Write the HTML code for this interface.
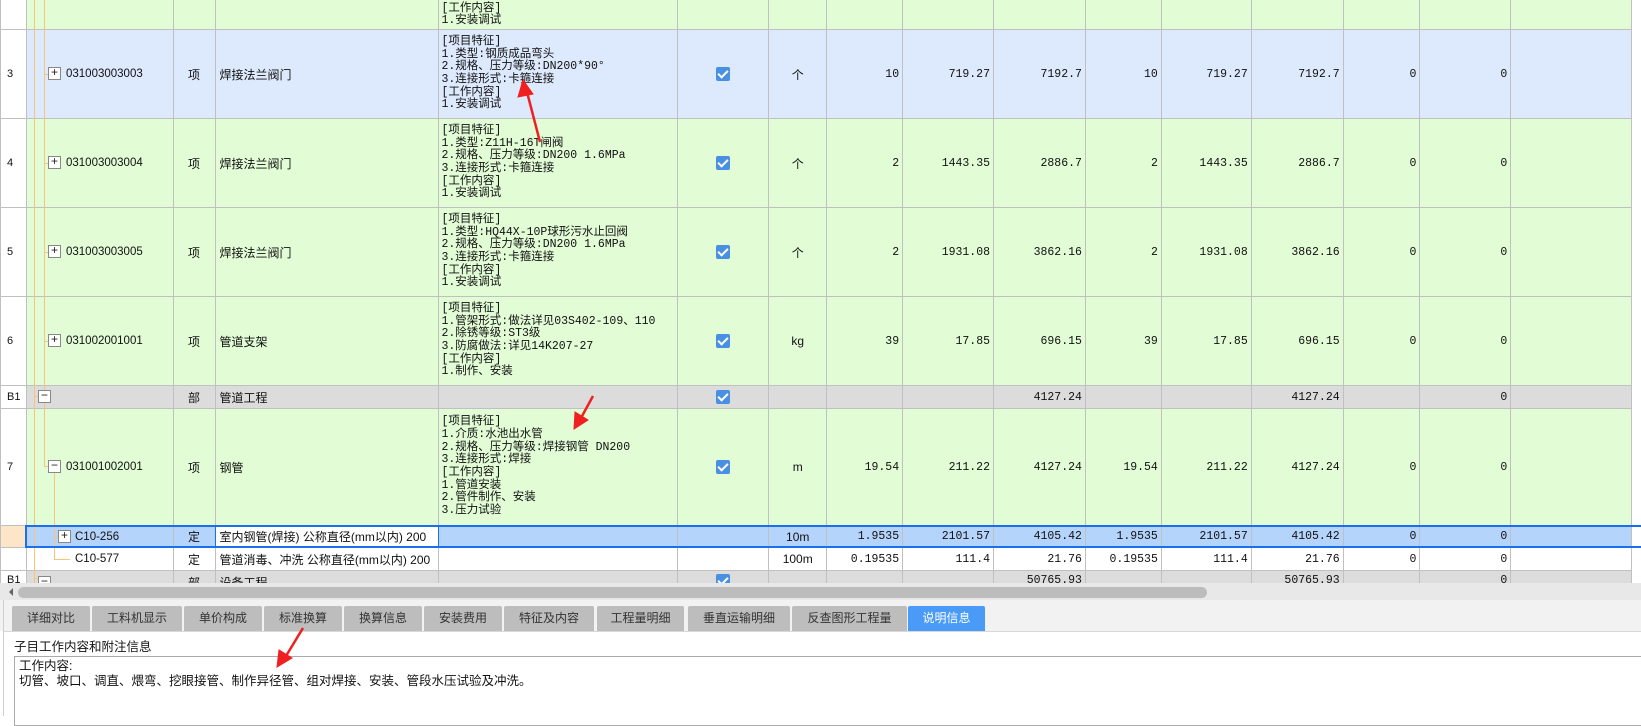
<!DOCTYPE html>
<html><head><meta charset="utf-8">
<style>
*{margin:0;padding:0;box-sizing:border-box}
body{width:1641px;height:716px;overflow:hidden;background:#fff;font-family:"Liberation Sans","Noto Sans CJK SC",sans-serif;font-size:12px;color:#111;position:relative}
#grid{position:absolute;left:0;top:0;width:1641px;height:583px;overflow:hidden;background:#fff}
table{border-collapse:collapse;table-layout:fixed;position:absolute;left:0;top:-1px}
td{border:1px solid #c0c0c0;padding:0 4px;white-space:nowrap;overflow:hidden;vertical-align:middle;font-size:12px}
td.n{text-align:right;font-family:"Liberation Mono","Noto Sans CJK SC",monospace;font-size:11.5px;padding-right:3px}
td.c{text-align:center}
td.f{line-height:12.7px;font-family:"Liberation Mono","Noto Sans CJK SC",monospace;font-size:11.5px;padding-left:3px}
td.num{background:#fff;padding-left:6px;font-size:11px}
tr.g td{background:#e2fcd6}
tr.b td{background:#dde9fc}
tr.d td{background:#dcdcdc}
tr.w td{background:#fff}
tr.s td{background:#b5d4fb}
tr.g td.num,tr.b td.num,tr.d td.num,tr.w td.num{background:#fff}
tr.s td.num{background:#fde6c8}
.cb{display:inline-block;width:14px;height:14px;background:#4a90e2;border-radius:2px;position:relative;vertical-align:middle}
.cb:after{content:"";position:absolute;left:4px;top:1px;width:4px;height:8px;border:solid #fff;border-width:0 2px 2px 0;transform:rotate(45deg)}
.ov{position:absolute}
.vl{position:absolute;width:1px;background:#f8c47a}
.hl{position:absolute;height:1px;background:#f8c47a}
.bx{position:absolute;width:13px;height:13px;border:1px solid #888;background:#fff;font-size:12px;line-height:10px;text-align:center;color:#222;font-family:"Liberation Mono",monospace}
.code{position:absolute;font-size:11.5px;font-family:"Liberation Sans",sans-serif}
.tab{position:absolute;top:606px;height:25px;background:#bdbdbd;color:#333;font-size:12px;line-height:25px;text-align:center;border-radius:2px 2px 0 0}
</style></head><body>
<div id="grid">
<table>
<colgroup>
<col style="width:26px"><col style="width:147px"><col style="width:42px"><col style="width:223px"><col style="width:240px"><col style="width:91px"><col style="width:58px"><col style="width:76px"><col style="width:91px"><col style="width:92px"><col style="width:76px"><col style="width:90px"><col style="width:92px"><col style="width:77px"><col style="width:91px"><col style="width:121px"><col style="width:8px">
</colgroup>
<tr class="g" style="height:30px"><td class="num"></td><td></td><td></td><td></td><td class="f" style="vertical-align:bottom;padding-bottom:1px">[工作内容]<br>1.安装调试</td><td></td><td></td><td></td><td></td><td></td><td></td><td></td><td></td><td></td><td></td><td></td><td style="background:#fff;border:none"></td></tr>
<tr class="b" style="height:89px"><td class="num">3</td><td></td><td class="c">项</td><td>焊接法兰阀门</td><td class="f">[项目特征]<br>1.类型:钢质成品弯头<br>2.规格、压力等级:DN200*90°<br>3.连接形式:卡箍连接<br>[工作内容]<br>1.安装调试</td><td class="c"><span class="cb"></span></td><td class="c">个</td><td class="n">10</td><td class="n">719.27</td><td class="n">7192.7</td><td class="n">10</td><td class="n">719.27</td><td class="n">7192.7</td><td class="n">0</td><td class="n">0</td><td></td><td style="background:#fff;border:none"></td></tr>
<tr class="g" style="height:89px"><td class="num">4</td><td></td><td class="c">项</td><td>焊接法兰阀门</td><td class="f">[项目特征]<br>1.类型:Z11H-16T闸阀<br>2.规格、压力等级:DN200 1.6MPa<br>3.连接形式:卡箍连接<br>[工作内容]<br>1.安装调试</td><td class="c"><span class="cb"></span></td><td class="c">个</td><td class="n">2</td><td class="n">1443.35</td><td class="n">2886.7</td><td class="n">2</td><td class="n">1443.35</td><td class="n">2886.7</td><td class="n">0</td><td class="n">0</td><td></td><td style="background:#fff;border:none"></td></tr>
<tr class="g" style="height:89px"><td class="num">5</td><td></td><td class="c">项</td><td>焊接法兰阀门</td><td class="f">[项目特征]<br>1.类型:HQ44X-10P球形污水止回阀<br>2.规格、压力等级:DN200 1.6MPa<br>3.连接形式:卡箍连接<br>[工作内容]<br>1.安装调试</td><td class="c"><span class="cb"></span></td><td class="c">个</td><td class="n">2</td><td class="n">1931.08</td><td class="n">3862.16</td><td class="n">2</td><td class="n">1931.08</td><td class="n">3862.16</td><td class="n">0</td><td class="n">0</td><td></td><td style="background:#fff;border:none"></td></tr>
<tr class="g" style="height:89px"><td class="num">6</td><td></td><td class="c">项</td><td>管道支架</td><td class="f">[项目特征]<br>1.管架形式:做法详见03S402-109、110<br>2.除锈等级:ST3级<br>3.防腐做法:详见14K207-27<br>[工作内容]<br>1.制作、安装</td><td class="c"><span class="cb"></span></td><td class="c">kg</td><td class="n">39</td><td class="n">17.85</td><td class="n">696.15</td><td class="n">39</td><td class="n">17.85</td><td class="n">696.15</td><td class="n">0</td><td class="n">0</td><td></td><td style="background:#fff;border:none"></td></tr>
<tr class="d" style="height:23px"><td class="num">B1</td><td></td><td class="c">部</td><td>管道工程</td><td></td><td class="c"><span class="cb"></span></td><td></td><td></td><td></td><td class="n">4127.24</td><td></td><td></td><td class="n">4127.24</td><td></td><td class="n">0</td><td></td><td style="background:#fff;border:none"></td></tr>
<tr class="g" style="height:117px"><td class="num">7</td><td></td><td class="c">项</td><td>钢管</td><td class="f">[项目特征]<br>1.介质:水池出水管<br>2.规格、压力等级:焊接钢管 DN200<br>3.连接形式:焊接<br>[工作内容]<br>1.管道安装<br>2.管件制作、安装<br>3.压力试验</td><td class="c"><span class="cb"></span></td><td class="c">m</td><td class="n">19.54</td><td class="n">211.22</td><td class="n">4127.24</td><td class="n">19.54</td><td class="n">211.22</td><td class="n">4127.24</td><td class="n">0</td><td class="n">0</td><td></td><td style="background:#fff;border:none"></td></tr>
<tr class="s" style="height:22px"><td class="num"></td><td></td><td class="c">定</td><td style="background:#fff">室内钢管(焊接) 公称直径(mm以内) 200</td><td></td><td></td><td class="c">10m</td><td class="n">1.9535</td><td class="n">2101.57</td><td class="n">4105.42</td><td class="n">1.9535</td><td class="n">2101.57</td><td class="n">4105.42</td><td class="n">0</td><td class="n">0</td><td></td><td style="background:#fff;border:none"></td></tr>
<tr class="w" style="height:23px"><td class="num"></td><td></td><td class="c">定</td><td>管道消毒、冲洗 公称直径(mm以内) 200</td><td></td><td></td><td class="c">100m</td><td class="n">0.19535</td><td class="n">111.4</td><td class="n">21.76</td><td class="n">0.19535</td><td class="n">111.4</td><td class="n">21.76</td><td class="n">0</td><td class="n">0</td><td></td><td style="background:#fff;border:none"></td></tr>
<tr class="d" style="height:23px"><td class="num" style="vertical-align:top;padding-top:3px">B1</td><td></td><td class="c" style="vertical-align:top;padding-top:3px">部</td><td style="vertical-align:top;padding-top:3px">设备工程</td><td></td><td class="c" style="vertical-align:top;padding-top:2px"><span class="cb"></span></td><td></td><td></td><td></td><td class="n" style="vertical-align:top;padding-top:3px">50765.93</td><td></td><td></td><td class="n" style="vertical-align:top;padding-top:3px">50765.93</td><td></td><td class="n" style="vertical-align:top;padding-top:3px">0</td><td></td><td style="background:#fff;border:none"></td></tr>
</table>
<div class="vl" style="left:34px;top:0;height:583px"></div>
<div class="vl" style="left:44px;top:0;height:396px"></div>
<div class="hl" style="left:34px;top:396px;width:5px"></div>
<div class="vl" style="left:44px;top:403px;height:64px"></div>
<div class="hl" style="left:44px;top:466px;width:5px"></div>
<div class="vl" style="left:54px;top:473px;height:86px"></div>
<div class="hl" style="left:54px;top:536px;width:5px"></div>
<div class="hl" style="left:54px;top:559px;width:16px"></div>
<div class="hl" style="left:34px;top:578px;width:5px"></div>
<div class="hl" style="left:44px;top:74px;width:5px"></div>
<div class="hl" style="left:44px;top:163px;width:5px"></div>
<div class="hl" style="left:44px;top:252px;width:5px"></div>
<div class="hl" style="left:44px;top:341px;width:5px"></div>
<div class="bx" style="left:48px;top:67px">+</div><div class="code" style="left:66px;top:68px">031003003003</div>
<div class="bx" style="left:48px;top:156px">+</div><div class="code" style="left:66px;top:157px">031003003004</div>
<div class="bx" style="left:48px;top:245px">+</div><div class="code" style="left:66px;top:246px">031003003005</div>
<div class="bx" style="left:48px;top:334px">+</div><div class="code" style="left:66px;top:335px">031002001001</div>
<div class="bx" style="left:38px;top:390px">−</div>
<div class="bx" style="left:48px;top:460px">−</div><div class="code" style="left:66px;top:461px">031001002001</div>
<div class="bx" style="left:58px;top:530px">+</div><div class="code" style="left:75px;top:531px">C10-256</div>
<div class="code" style="left:75px;top:553px">C10-577</div>
<div class="bx" style="left:38px;top:576px">−</div>
<div class="ov" style="left:25px;top:525px;width:1616px;height:23px;border:2px solid #1a6ff0;border-right:none"></div>
<div class="ov" style="left:215px;top:526px;width:224px;height:21px;border:1px solid #1a6ff0"></div>
</div>
<div class="ov" style="left:0;top:583px;width:1641px;height:17px;background:#e8e8e8"></div>
<div class="ov" style="left:9px;top:588px;width:0;height:0;border-top:4px solid transparent;border-bottom:4px solid transparent;border-right:4px solid #666"></div>
<div class="ov" style="left:18px;top:587px;width:1189px;height:11px;background:#bcbcbc;border-radius:6px"></div>
<div class="ov" style="left:0;top:600px;width:1641px;height:31px;background:#f2f2f2"></div>
<div class="ov" style="left:3px;top:600px;width:1px;height:116px;background:#cfcfcf"></div>
<div class="tab" style="left:12px;width:78px">详细对比</div>
<div class="tab" style="left:92px;width:90px">工料机显示</div>
<div class="tab" style="left:184px;width:78px">单价构成</div>
<div class="tab" style="left:264px;width:78px">标准换算</div>
<div class="tab" style="left:344px;width:78px">换算信息</div>
<div class="tab" style="left:424px;width:78px">安装费用</div>
<div class="tab" style="left:504px;width:90px">特征及内容</div>
<div class="tab" style="left:597px;width:87px">工程量明细</div>
<div class="tab" style="left:688px;width:102px">垂直运输明细</div>
<div class="tab" style="left:792px;width:115px">反查图形工程量</div>
<div class="tab" style="left:908px;width:77px;background:#4a9bf7;color:#fff">说明信息</div>
<div class="ov" style="left:4px;top:631px;width:1637px;height:1px;background:#d8d8d8"></div>
<div class="ov" style="left:14px;top:636px;font-size:12.5px">子目工作内容和附注信息</div>
<div class="ov" style="left:14px;top:656px;width:1640px;height:70px;border:1px solid #aaa;background:#fff"></div>
<div class="ov" style="left:19px;top:659px;font-size:12.5px;line-height:15px">工作内容:<br>切管、坡口、调直、煨弯、挖眼接管、制作异径管、组对焊接、安装、管段水压试验及冲洗。</div>
<svg class="ov" style="left:0;top:0" width="1641" height="716">
<g fill="#f02020" stroke="#f02020">
<line x1="540" y1="142" x2="527" y2="92" stroke-width="2.5"/>
<polygon points="523,80 518,97 533,94" stroke-width="1"/>
<line x1="593" y1="396" x2="581" y2="418" stroke-width="2.5"/>
<polygon points="574,429 575,412 588,420" stroke-width="1"/>
<line x1="303" y1="628" x2="286" y2="656" stroke-width="2.5"/>
<polygon points="277,667 279,650 292,658" stroke-width="1"/>
</g>
</svg>
</body></html>
